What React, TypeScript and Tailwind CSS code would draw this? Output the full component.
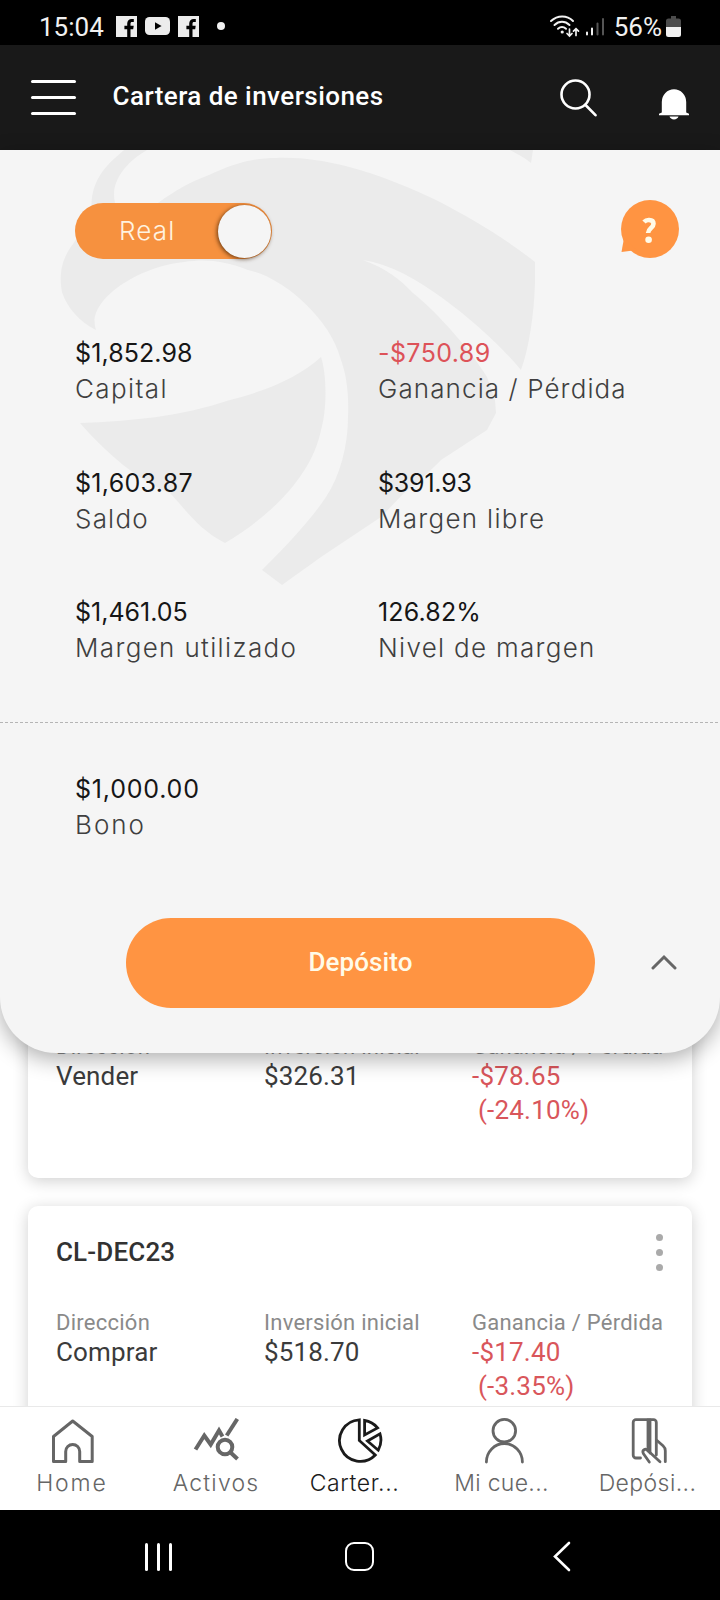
import type { ReactNode } from "react";

type Stat = {
  value: string;
  label: string;
  valueClass: string;
  labelClass: string;
};

type Position = {
  symbol?: string;
  direction: string;
  invested: string;
  profit: string;
  percent: string;
};

type NavItem = {
  label: string;
  icon: ReactNode;
  active?: boolean;
  className: string;
};

const stats: Stat[] = [
  { value: "$1,852.98", label: "Capital", valueClass: "text-[#161616] tracking-[0.1px]", labelClass: "tracking-[1.4px]" },
  { value: "-$750.89", label: "Ganancia / Pérdida", valueClass: "text-[#dd5258] tracking-[0.4px]", labelClass: "tracking-[1.1px]" },
  { value: "$1,603.87", label: "Saldo", valueClass: "text-[#161616] tracking-[0.3px]", labelClass: "tracking-[1.2px]" },
  { value: "$391.93", label: "Margen libre", valueClass: "text-[#161616] tracking-[-0.2px]", labelClass: "tracking-[1.3px]" },
  { value: "$1,461.05", label: "Margen utilizado", valueClass: "text-[#161616]", labelClass: "tracking-[1.35px]" },
  { value: "126.82%", label: "Nivel de margen", valueClass: "text-[#161616] tracking-[0.15px]", labelClass: "tracking-[1.3px]" },
];

const bonus: Stat = {
  value: "$1,000.00",
  label: "Bono",
  valueClass: "text-[#161616] tracking-[0.8px]",
  labelClass: "tracking-[2px]",
};

const positions: Position[] = [
  { direction: "Vender", invested: "$326.31", profit: "-$78.65", percent: "(-24.10%)" },
  { symbol: "CL-DEC23", direction: "Comprar", invested: "$518.70", profit: "-$17.40", percent: "(-3.35%)" },
];

function FacebookIcon() {
  return (
    <svg width="21" height="21" viewBox="0 0 21 21">
      <rect width="21" height="21" fill="#ececec" />
      <path d="M11.2 21v-7.8H8.4V9.8h2.8V7.6c0-3 1.8-4.7 4.5-4.7h2.1v3.2h-1.6c-1.3 0-1.7.6-1.7 1.7v2h3.2l-.5 3.4h-2.7V21z" fill="#000" />
    </svg>
  );
}

function YoutubeIcon() {
  return (
    <svg width="25" height="18" viewBox="0 0 25 18">
      <rect width="25" height="18" rx="4.5" fill="#ececec" />
      <path d="M10 5.2v7.6l6.6-3.8z" fill="#000" />
    </svg>
  );
}

function StatusBar() {
  return (
    <div className="flex h-[45px] shrink-0 items-center bg-black pl-[39px] pr-[39px] pt-[7px] text-[#f1f1f1]">
      <span className="w-[77px] pt-[2px] text-[26px] leading-none">15:04</span>
      <div className="flex items-center gap-2">
        <FacebookIcon />
        <YoutubeIcon />
        <FacebookIcon />
      </div>
      <span className="ml-[18px] size-2 rounded-full bg-[#f1f1f1]" />
      <div className="ml-auto flex items-center">
        <svg width="56" height="24" viewBox="0 0 56 24" fill="none" strokeLinecap="round" className="mr-[9px]">
          <g stroke="#f1f1f1" strokeWidth="2">
            <path d="M2 7C8.500 1 18 1 24 7" />
            <path d="M5.500 11C10 6.800 16 6.800 20.500 11" />
            <path d="M9 14.800C11.500 12.600 14.500 12.600 17 14.800" />
            <path d="M20.500 15v6.500M18 19.500l2.500 2.500 2.500-2.500M27 21.500v-6.500M24.500 17.200l2.500-2.500 2.500 2.500" strokeWidth="1.700" />
          </g>
          <circle cx="13.200" cy="18" r="1.600" fill="#f1f1f1" />
          <path d="M38 18.500v2M43 14.500v6" stroke="#f1f1f1" strokeWidth="2" />
          <path d="M48.500 9.500v11M54 5v15.500" stroke="#555" strokeWidth="2" />
        </svg>
        <span className="pt-[2px] text-[26px] leading-none">56%</span>
        <svg width="15" height="21" viewBox="0 0 15 21" className="ml-[4px]">
          <path d="M5 0h5v2.500h2.500A2.500 2.500 0 0 1 15 5v6H0V5a2.500 2.500 0 0 1 2.500-2.500H5z" fill="#4c4c4c" />
          <path d="M0 11h15v7.500a2.500 2.500 0 0 1-2.500 2.500h-10A2.500 2.500 0 0 1 0 18.500z" fill="#f1f1f1" />
        </svg>
      </div>
    </div>
  );
}

function Header() {
  return (
    <header className="flex h-[105px] shrink-0 items-center bg-[#191919] pl-[31px] pr-[31px]">
      <div className="flex w-[45px] flex-col gap-[13px]">
        <span className="h-[3px] rounded-sm bg-white" />
        <span className="h-[3px] rounded-sm bg-white" />
        <span className="h-[3px] rounded-sm bg-white" />
      </div>
      <h1 className="mb-[4px] ml-[36.5px] text-[26px] font-medium leading-none tracking-[0.45px] text-white">
        Cartera de inversiones
      </h1>
      <svg width="38" height="38" viewBox="0 0 38 38" fill="none" stroke="#fff" strokeWidth="2.600" strokeLinecap="round" className="ml-auto">
        <circle cx="15.500" cy="15.500" r="14" />
        <path d="M25.500 26l10 10.200" />
      </svg>
      <svg width="30" height="31" viewBox="0 0 30 31" fill="#fff" className="ml-[61px] mt-[13px]">
        <path d="M2.800 23.500V13a12.200 12.700 0 0 1 24.400 0v10.500l2.800 1.300v1.400H0v-1.400z" />
        <path d="M10.500 27.600h9c-.6 1.700-2.300 2.900-4.500 2.900s-3.900-1.200-4.500-2.900z" />
      </svg>
    </header>
  );
}

function Watermark() {
  return (
    <svg width="720" height="450" viewBox="0 150 720 450" fill="#ebebeb" className="absolute left-0 top-0">
      <path d="M158 203C176 190 190 182 209 175C232 164 252 158 276 158C330 156 385 176 436 200C475 220 510 242 535 262L535 283C534 315 529 348 521 370C500 345 475 322 441 297C416 279 390 264 363 260C385 268 400 279 413 293C440 315 470 350 487 377L495 400L496 413L487 430L441 460C425 476 415 484 404 493L381 517L321 557L282 585L262 570C280 552 308 524 326 497C340 476 348 446 348 417C349 395 347 376 340 357C330 320 285 278 248 270C222 260 205 259 184 262C140 266 85 300 96 330C80 322 67 308 62 292C58 270 64 256 73 244L92 215C88 180 108 164 124 150L147 150C125 163 110 182 115 203L122 224C135 218 147 212 158 203Z" />
      <path d="M80 423C130 421 180 417 230 400C270 390 300 376 321 357C327 375 327 410 321 430C313 470 280 510 225 543C200 530 190 515 170 493C138 480 108 455 80 423Z" />
      <path d="M510 150h23l-2 13c-6-5-12-8-21-13z" />
    </svg>
  );
}

function StatBlock({ stat }: { stat: Stat }) {
  return (
    <div className="h-[129.5px] whitespace-nowrap font-[Inter,sans-serif]">
      <p className={`text-[25px] leading-9 ${stat.valueClass}`}>{stat.value}</p>
      <p className={`text-[26px] font-light leading-9 text-[#3f3f3f] ${stat.labelClass}`}>{stat.label}</p>
    </div>
  );
}

function AccountPanel() {
  return (
    <section className="relative z-10 h-[903px] shrink-0">
      <div className="relative flex h-full flex-col overflow-hidden rounded-b-[56px] bg-[#f5f5f5] shadow-[0_6px_22px_rgba(0,0,0,0.32)]">
        <Watermark />
        <div className="relative flex items-start justify-between pl-[75px] pr-[41px] pt-[50px]">
          <div className="mt-[3px] flex h-14 w-[197px] items-center justify-between rounded-full bg-[#f6913f] pr-[1px]">
            <span className="mb-[2px] ml-[44px] font-[Inter,sans-serif] text-[26px] font-light tracking-[1.2px] text-[#fff3e0]">Real</span>
            <span className="size-[53px] rounded-full bg-[#f5f5f5] shadow-[-1px_1px_4px_rgba(60,30,0,0.75)]" />
          </div>
          <svg width="58" height="58" viewBox="0 0 58 58">
            <circle cx="29" cy="29" r="29" fill="#ff9442" />
            <path d="M3 38L0.500 52L16 50z" fill="#ff9442" />
            <path d="M23 22c1.500-1.600 3.300-2.100 5.100-2 2.800.1 4.400 1.600 4.400 3.700 0 4.300-5.200 4.300-5.400 9.300" fill="none" stroke="#fffbe9" strokeWidth="4.600" />
            <circle cx="27.600" cy="39.700" r="3.300" fill="#fffbe9" />
          </svg>
        </div>

        <div className="relative mt-[76px] grid grid-cols-[303px_1fr] pl-[75px]">
          {stats.map((stat) => (
            <StatBlock key={stat.label} stat={stat} />
          ))}
        </div>

        <div className="-mt-[2px] h-px shrink-0 bg-[repeating-linear-gradient(90deg,#b5b5b5_0_3px,transparent_3px_5px)]" />

        <div className="mt-[48px] h-[147px] pl-[75px]">
          <StatBlock stat={bonus} />
        </div>

        <div className="flex items-center">
          <button type="button" className="ml-[126px] h-[90px] w-[469px] rounded-full bg-[#ff9442] text-[26px] font-medium tracking-[0.1px] text-[#fffbe9]">
            Depósito
          </button>
          <svg width="26" height="16" viewBox="0 0 26 16" fill="none" stroke="#666" strokeWidth="3" strokeLinecap="round" className="mb-[2px] ml-[56px]">
            <path d="M2 14L13 3l11 11" />
          </svg>
        </div>
      </div>
    </section>
  );
}

function PositionCard({ position }: { position: Position }) {
  return (
    <article className="h-[248px] shrink-0 rounded-[10px] bg-white px-7 pt-7 shadow-[0_3px_16px_rgba(0,0,0,0.19)]">
      <div className="flex h-9 items-start justify-between">
        <h2 className="text-[26px] font-medium leading-9 tracking-[0.15px] text-[#323232]">{position.symbol}</h2>
        <div className="flex flex-col gap-2 pr-[1px]">
          <span className="size-[7px] rounded-full bg-[#aaa]" />
          <span className="size-[7px] rounded-full bg-[#aaa]" />
          <span className="size-[7px] rounded-full bg-[#aaa]" />
        </div>
      </div>
      <div className="mt-[40px] grid grid-cols-[208px_208px_1fr] whitespace-nowrap text-[26px] leading-[34px] tracking-[0.15px] text-[#3b3b3b]">
        <div>
          <p className="text-[22px] leading-[25px] tracking-[0.25px] text-[#8a8a8a]">Dirección</p>
          <p>{position.direction}</p>
        </div>
        <div>
          <p className="text-[22px] leading-[25px] tracking-[0.25px] text-[#8a8a8a]">Inversión inicial</p>
          <p>{position.invested}</p>
        </div>
        <div>
          <p className="text-[22px] leading-[25px] tracking-[0.25px] text-[#8a8a8a]">Ganancia / Pérdida</p>
          <p className="tracking-[0.2px] text-[#d9565b]">{position.profit}</p>
          <p className="pl-[6px] tracking-[0.2px] text-[#d9565b]">{position.percent}</p>
        </div>
      </div>
    </article>
  );
}

const navItems: NavItem[] = [
  {
    label: "Home",
    className: "tracking-[1.9px]",
    icon: (
      <g strokeWidth="3">
        <path d="M5.500 18.500L24.700 3l19.500 15.500V43.500H31.700V33.500a7 7 0 0 0-14 0V43.500H5.500z" />
      </g>
    ),
  },
  {
    label: "Activos",
    className: "tracking-[1.2px]",
    icon: (
      <g strokeWidth="4" strokeLinecap="butt" strokeLinejoin="miter">
        <path d="M3.500 31.500L12.300 17.500l6.400 9L27 12.500l3.500 6" />
        <path d="M34.700 17.500L45.300 1" />
        <circle cx="33" cy="29" r="7.300" />
        <path d="M38 34l7.500 7" />
      </g>
    ),
  },
  {
    label: "Carter...",
    active: true,
    className: "mr-[11px] tracking-[0.6px]",
    icon: (
      <g strokeWidth="2.800" strokeLinejoin="miter" transform="translate(1 .5)">
        <path d="M22.300 1.300A20.800 20.800 0 1 0 38.300 36.500L22.300 22z" />
        <path d="M27.600 2V16.500L40.600 9.400A21 21 0 0 0 27.600 2z" />
        <path d="M30.500 22.500L43 15.300A21 21 0 0 1 41.200 31.700z" />
      </g>
    ),
  },
  {
    label: "Mi cue...",
    className: "mr-[5px] tracking-[0.3px]",
    icon: (
      <g strokeWidth="2.800">
        <circle cx="24.300" cy="12.700" r="11.300" />
        <path d="M6.400 44a18 18.500 0 0 1 36 0" />
      </g>
    ),
  },
  {
    label: "Depósi...",
    className: "mr-px tracking-[0.4px]",
    icon: (
      <g strokeWidth="2.800">
        <path d="M16.500 40H12a2.800 2.800 0 0 1-2.800-2.800V4.500A2.800 2.800 0 0 1 12 1.700h17.500a2.800 2.800 0 0 1 2.800 2.800V37" />
        <path d="M24 2v31M26 2v33" />
        <path d="M25.300 44l-6-8.500c-1.600-3.500 2.200-5.500 4.500-3L36 43.700" />
        <path d="M33 22.500l6 5.200c1.500 1.400 2.300 3 2.300 5v11" />
      </g>
    ),
  },
];

function BottomNav() {
  return (
    <nav className="relative z-20 grid h-[104px] shrink-0 grid-cols-5 border-t border-[#e9e9e9] bg-white">
      {navItems.map((item) => (
        <div
          key={item.label}
          className={
            item.active
              ? "flex flex-col items-center pt-[11px] text-[#1b1b1b]"
              : "flex flex-col items-center pt-[11px] text-[#666]"
          }
        >
          <svg width="48" height="48" viewBox="0 0 48 48" fill="none" stroke="currentColor" strokeLinecap="round" strokeLinejoin="round">
            {item.icon}
          </svg>
          <span className={`whitespace-nowrap font-[Inter,sans-serif] text-[23px] font-light leading-[34px] ${item.className}`}>
            {item.label}
          </span>
        </div>
      ))}
    </nav>
  );
}

function SystemBar() {
  return (
    <div className="relative z-20 flex h-[90px] shrink-0 items-center bg-black pt-[3px]">
      <div className="ml-[145px] flex gap-[9px]">
        <span className="h-7 w-[3px] rounded-sm bg-white" />
        <span className="h-7 w-[3px] rounded-sm bg-white" />
        <span className="h-7 w-[3px] rounded-sm bg-white" />
      </div>
      <span className="ml-[173px] h-[29px] w-[29px] rounded-[9px] border-2 border-white" />
      <svg width="18" height="31" viewBox="0 0 18 31" fill="none" stroke="#fff" strokeWidth="2.600" strokeLinecap="round" className="ml-[179px]">
        <path d="M16 2L2 15.500 16 29" />
      </svg>
    </div>
  );
}

export default function App() {
  return (
    <div className="flex h-[1600px] w-[720px] flex-col overflow-hidden bg-white font-[Roboto,sans-serif]">
      <StatusBar />
      <Header />
      <AccountPanel />
      <main className="-mt-[123px] flex min-h-0 flex-1 flex-col gap-[28px] overflow-hidden px-7">
        {positions.map((position) => (
          <PositionCard key={position.direction} position={position} />
        ))}
      </main>
      <BottomNav />
      <SystemBar />
    </div>
  );
}
